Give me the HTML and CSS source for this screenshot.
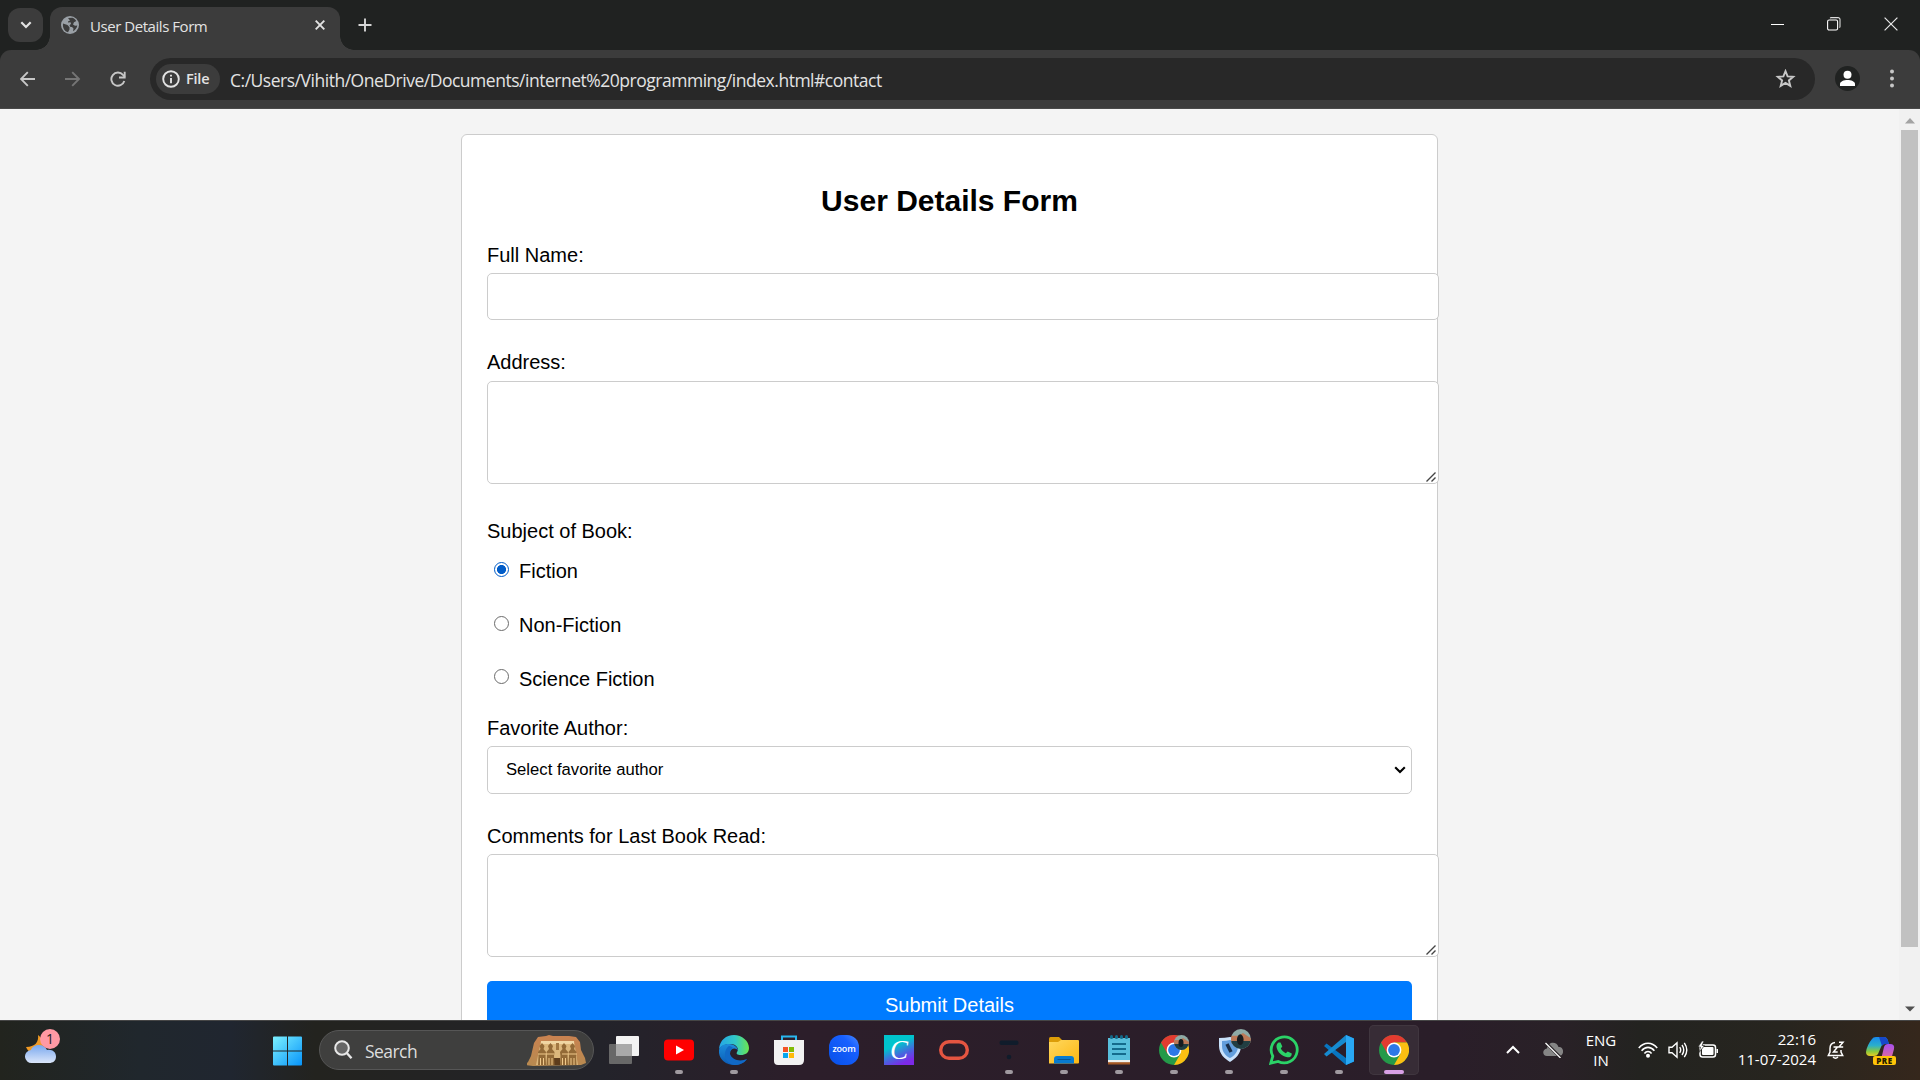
FILE: index.html
```html
<!DOCTYPE html>
<html lang="en">
<head>
<meta charset="utf-8">
<title>User Details Form</title>
<link rel="stylesheet" href="styles.css">
</head>
<body>
<header class="tabstrip">
  <button class="tab-search"><svg width="12" height="8" viewBox="0 0 12 8"><path d="M1.3 1.3 6 6l4.700-4.700" fill="none" stroke="#e3e3e3" stroke-width="2.200"/></svg></button>
  <div class="tab">
    <svg class="globe" width="18" height="18" viewBox="0 0 18 18"><circle cx="9" cy="9" r="9" fill="#9aa0a6"/><path d="M2 7.500 6.500 9l2 2.200v2.300l-1.500 2.800C3.500 15.500 1.500 12 2 7.500ZM7 2l4.500-.3c1.500.5 3 1.800 3.800 3.300l-2.300 1.200-1 2.300 2 1.300 2.300-.2c-.3 2.300-2 4.600-4.300 5.600l.5-2.600-1.500-1.600H9.500l-1-1.500 1.500-1.800-.5-1.500-2.500.3V5.500L9 4.500Z" fill="#3c3c3c"/></svg>
    <span class="tab-title">User Details Form</span>
    <svg class="tab-close" width="10" height="10" viewBox="0 0 10 10"><path d="m.7.7 8.600 8.600m0-8.600L.7 9.300" stroke="#e3e3e3" stroke-width="1.900"/></svg>
  </div>
  <svg class="new-tab" width="14" height="14" viewBox="0 0 14 14"><path d="M7 .5v13M.5 7h13" stroke="#d6d6d6" stroke-width="1.900"/></svg>
  <div class="window-buttons">
    <svg class="minimize" width="14" height="14" viewBox="0 0 14 14"><path d="M0 7.500h13" stroke="#fff"/></svg>
    <svg width="14" height="14" viewBox="0 0 14 14"><rect x=".6" y="3" width="10" height="10" rx="1.500" fill="none" stroke="#fff" stroke-width="1.100"/><path d="M3.200 1.200c.2-.5.500-.6 1-.6H11a2 2 0 0 1 2 2v6.800c0 .6-.2.9-.7 1.100" fill="none" stroke="#ddd" stroke-width="1.100"/></svg>
    <svg width="14" height="14" viewBox="0 0 14 14"><path d="m.6.600 12.800 12.800m0-12.800L.6 13.400" stroke="#e8e8e8" stroke-width="1.200"/></svg>
  </div>
</header>
<div class="toolbar-back">
<nav class="toolbar">
  <svg class="nav-icon" width="16" height="16" viewBox="0 0 16 16"><path d="M15 8H1M7.800 1.200 1 8l6.800 6.800" fill="none" stroke="#c7c7c7" stroke-width="1.900"/></svg>
  <svg class="nav-icon" width="16" height="16" viewBox="0 0 16 16"><path d="M0 8h14M7.200 1.200 14 8l-6.800 6.800" fill="none" stroke="#757575" stroke-width="1.900"/></svg>
  <svg class="nav-icon" width="16" height="16" viewBox="0 0 16 16"><path d="M14.300 10a6.600 6.600 0 1 1-1.300-6.100l1.800 2" fill="none" stroke="#c7c7c7" stroke-width="1.900"/><path d="M14.700 .8v5.700H9" fill="none" stroke="#c7c7c7" stroke-width="1.900"/></svg>
  <div class="omnibox">
    <span class="chip"><svg width="18" height="18" viewBox="0 0 18 18"><circle cx="9" cy="9" r="7.800" fill="none" stroke="#e3e3e3" stroke-width="1.900"/><path d="M9 8v5.200M9 4.700v1.900" stroke="#e3e3e3" stroke-width="1.900"/></svg><span class="chip-text">File</span></span>
    <span class="url">C:/Users/Vihith/OneDrive/Documents/internet%20programming/index.html#contact</span>
    <svg class="star" width="21" height="20" viewBox="0 0 21 20"><path d="m10.500 2.200 2.100 5.200 5.600.4-4.300 3.600 1.400 5.500-4.800-3-4.800 3 1.400-5.500-4.300-3.600 5.600-.4Z" fill="none" stroke="#c7c7c7" stroke-width="1.900"/></svg>
  </div>
  <svg class="profile" width="25" height="25" viewBox="0 0 25 25"><circle cx="12.500" cy="12.500" r="12.500" fill="#202221"/><circle cx="12.500" cy="8.800" r="4" fill="#fff"/><path d="M5 20v-2c0-2.500 4-4 7.500-4s7.500 1.500 7.500 4v2Z" fill="#fff"/></svg>
  <svg class="menu" width="4" height="19" viewBox="0 0 4 19"><g fill="#c7c7c7"><circle cx="2" cy="2.500" r="2"/><circle cx="2" cy="9.500" r="2"/><circle cx="2" cy="16.500" r="2"/></g></svg>
</nav>
</div>
<main class="viewport">
  <div class="page">
    <form class="card">
      <h2 class="title">User Details Form</h2>
      <div class="field"><label for="name">Full Name:</label><input class="box" id="name" type="text"></div>
      <div class="field field-address"><label for="address">Address:</label><div class="area"><textarea class="box" id="address"></textarea><svg class="grip" width="10" height="10" viewBox="0 0 10 10"><path d="M.5 9.500 9.500.5M5.500 9.500l4-4" stroke="#444" stroke-width="1.400"/></svg></div></div>
      <div class="subject">
        <p class="legend">Subject of Book:</p>
        <label class="option"><input type="radio" name="subject" checked>Fiction</label>
        <label class="option"><input type="radio" name="subject">Non-Fiction</label>
        <label class="option"><input type="radio" name="subject">Science Fiction</label>
      </div>
      <div class="field field-author"><label>Favorite Author:</label><div class="select" role="combobox"><span>Select favorite author</span><svg width="12" height="8" viewBox="0 0 12 8"><path d="m1.200 1.200 4.800 4.800 4.800-4.800" fill="none" stroke="#000" stroke-width="2.100"/></svg></div></div>
      <div class="field"><label for="comments">Comments for Last Book Read:</label><div class="area"><textarea class="box" id="comments"></textarea><svg class="grip" width="10" height="10" viewBox="0 0 10 10"><path d="M.5 9.500 9.500.5M5.500 9.500l4-4" stroke="#444" stroke-width="1.400"/></svg></div></div>
      <button class="submit" type="button">Submit Details</button>
    </form>
  </div>
  <div class="scrollbar">
    <svg width="10" height="6" viewBox="0 0 10 6"><path d="M0 5.500 5 0l5 5.500Z" fill="#a3a3a3"/></svg>
    <div class="thumb"></div>
    <svg class="down" width="10" height="6" viewBox="0 0 10 6"><path d="M0 .5 5 5.500l5-5Z" fill="#505050"/></svg>
  </div>
</main>
<footer class="taskbar">
  <div class="weather">
    <svg width="36" height="40" viewBox="0 0 36 40"><defs><linearGradient id="cloud" x2="0" y2="1"><stop stop-color="#79a8ee"/><stop offset="1" stop-color="#dbe6fa"/></linearGradient></defs><path d="M13 7c1 7-3 12-12 12 2 5 7 8 13 5 5-3 6-12-1-17Z" fill="#f09a24"/><path d="M7 35a6.500 6.500 0 0 1-1-13c2-6 13-7 16 0 5-1 9 2 9 6.500S28 35 24 35Z" fill="url(#cloud)"/></svg>
    <span class="count">1</span>
  </div>
  <div class="apps">
    <svg class="start" width="30" height="30" viewBox="0 0 30 30"><defs><linearGradient id="win" x2="1" y2="1"><stop stop-color="#7cf1ff"/><stop offset="1" stop-color="#0794fa"/></linearGradient></defs><path d="M0 1.500Q0 .5 1 .5h13v14H0ZM15 .5h13q1 0 1 1v13H15ZM0 15.500h14v14H1q-1 0-1-1ZM15 15.500h14v13q0 1-1 1H15Z" fill="url(#win)"/></svg>
    <div class="search">
      <svg width="19" height="20" viewBox="0 0 19 20"><circle cx="8" cy="8" r="6.800" fill="#666" stroke="#e8e8e8" stroke-width="2"/><path d="m12.800 13 4.700 5.200" stroke="#e8e8e8" stroke-width="2.400"/></svg>
      <span>Search</span>
      <svg class="temple" width="60" height="32" viewBox="0 0 60 32"><defs><linearGradient id="rock" x2="0" y2="1"><stop stop-color="#c98250"/><stop offset="1" stop-color="#b88a50"/></linearGradient></defs><path d="M1 28 4 22 7 9l4-6 8-1 3-1 4 1 16 0 7 1 4 5 1 8 4 8 1 5-5 2-48 1-8-1Z" fill="url(#rock)"/><path d="M14 7h33l4 24H9Z" fill="#dcb77c"/><path d="M14 7h33v3H14Z" fill="#f0d6a3"/><path d="M27 24h6v7h-6Z" fill="#5d3c1c"/><path d="M29 9h3v7h-3Z" fill="#a27842"/><g fill="#936a37"><path id="king" d="m15 9 2.500 3-1 3 2.500 3-.5 4 .5 9h-8l.5-9-.5-4 2.500-3-1-3Z"/><use href="#king" x="8.500"/><use href="#king" x="22"/><use href="#king" x="30.500"/></g><path d="M13.500 24v7m3-7v7m5.500-7v7m3-7v7m10.500-7v7m3-7v7m5.500-7v7m3-7v7M11 20h16m8 0h15" stroke="#f0c98b" stroke-width="1"/></svg>
    </div>
    <div class="app"><svg width="30" height="30" viewBox="0 0 30 30"><rect x="7" y="1" width="23" height="20" rx="1" fill="#f3f3f3"/><rect y="9" width="23" height="20" rx="1" fill="#686868"/><path d="M7 9h16v12H7Z" fill="#a9a9a9"/></svg></div>
    <div class="app running"><svg width="30" height="30" viewBox="0 0 30 30"><rect y="4.500" width="30" height="21" rx="4" fill="#f00"/><path d="m12 10.500 8 4.500-8 4.500Z" fill="#fff"/></svg></div>
    <div class="app running"><svg width="30" height="30" viewBox="0 0 30 30"><defs><linearGradient id="edge1"><stop stop-color="#24a5e8"/><stop offset=".55" stop-color="#32c8c7"/><stop offset="1" stop-color="#6be74e"/></linearGradient><linearGradient id="edge2" x2="0" y2="1"><stop stop-color="#1c8ddc"/><stop offset="1" stop-color="#0b5bb5"/></linearGradient></defs><path d="M0 14C1 5 7 0 15 0s15 6 15 13c0 5-4 7-8 7-4 0-5-1-4-3 3-3-1-8-6-8C6 9 2 11 0 14Z" fill="url(#edge1)"/><path d="M0 15c1-5 6-6 10-6 6 0 9 4 9 7-2-4-8-3-8 3 0 6 6 9 11 8 2 0 4-1 6-3-3 4-7 6-13 6C6 30-1 23 0 15Z" fill="url(#edge2)"/><path d="M10 11c-6 4-6 17 5 19 5 0 10-2 13-6-7 3-15 1-17-5-.5-3 .5-5 3-6-1-1-2-2-4-2Z" fill="#1169c6"/></svg></div>
    <div class="app"><svg width="30" height="30" viewBox="0 0 30 30"><path d="M8 7V1.500h14V7" fill="none" stroke="#29b7ef" stroke-width="2"/><path d="M0 5h30v20q0 5-5 5H4q-4 0-4-4Z" fill="#f2f2f2"/><path d="M9 12h5v5H9Z" fill="#f35325"/><path d="M15 12h5v5h-5Z" fill="#81bc06"/><path d="M9 18h5v5H9Z" fill="#05a6f0"/><path d="M15 18h5v5h-5Z" fill="#ffba08"/></svg></div>
    <div class="app"><span class="zoom-app">zoom</span></div>
    <div class="app"><span class="canva-app">C</span></div>
    <div class="app"><svg width="30" height="30" viewBox="0 0 30 30"><rect x="1.700" y="6.700" width="26.600" height="16.600" rx="8.300" fill="none" stroke="#e55541" stroke-width="3.400"/></svg></div>
    <div class="app running"><svg width="30" height="30" viewBox="0 0 30 30"><rect x="5.500" y="5.500" width="19" height="4.500" rx="2" fill="#101c2b"/><circle cx="15" cy="22" r="2.300" fill="#101c2b"/></svg></div>
    <div class="app running"><svg width="30" height="30" viewBox="0 0 30 30"><defs><linearGradient id="folder" x2="1" y2="1"><stop stop-color="#ffd85e"/><stop offset="1" stop-color="#fcb713"/></linearGradient></defs><path d="M0 3.500Q0 2 1.500 2H10l3 3v5H0Z" fill="#dc9d08"/><path d="M0 7h9l3-2h17q1 0 1 1v21.500q0 1-1 1H0Z" fill="url(#folder)"/><path d="M5 28.500V24q0-3 3-3h14q3 0 3 3v4.500Z" fill="#087bd0"/><path d="M8.500 24.500h13" stroke="#075696"/></svg></div>
    <div class="app running"><svg width="30" height="30" viewBox="0 0 30 30"><path d="M4 26h22v3.500H4Z" fill="#a45722"/><path d="M4 3h22v24H4Z" fill="#58bfdc"/><path d="M4 25h22v2.200H4Z" fill="#f0f0ed"/><path d="M8 9h14M8 14h14M8 19h14" stroke="#146b8c" stroke-width="1.800"/><g fill="#126b8b"><rect x="6" y="0" width="3" height="4" rx="1.500"/><rect x="11" y="0" width="3" height="4" rx="1.500"/><rect x="16" y="0" width="3" height="4" rx="1.500"/><rect x="21" y="0" width="3" height="4" rx="1.500"/></g></svg></div>
    <div class="app running"><svg width="30" height="30" viewBox="0 0 30 30"><g id="chrome"><circle cx="15" cy="15" r="15" fill="#249a49"/><path d="M2 7.500A15 15 0 0 1 28 7.500H15L8.500 18.700Z" fill="#e23b30"/><path d="M28 7.500A15 15 0 0 1 15 30l6.500-11.200L15 7.500Z" fill="#fbbf12"/><circle cx="15" cy="15" r="7.400" fill="#fff"/><circle cx="15" cy="15" r="5.900" fill="#2c78e7"/></g><g><clipPath id="face"><circle cx="22.500" cy="7.500" r="7.500"/></clipPath><g id="avatar" clip-path="url(#face)"><path d="M15 0h15v15H15Z" fill="#8eaaa6"/><path d="M15 5h6l3-2 6 4v4H15Z" fill="#bd7957"/><path d="M15 9h15v6H15Z" fill="#213e42"/><ellipse cx="22" cy="8" rx="2.500" ry="4" fill="#171c20"/></g></g></svg></div>
    <div class="app running"><svg class="shield" width="36" height="36" viewBox="0 0 36 36"><path d="M4 9q6 0 11-1 5 1 11 1v8c0 8-6 13-11 16C10 30 4 25 4 17Z" fill="#c9e2fb"/><path d="M7 12q4 0 8-1 4 1 8 1v5c0 6-4 10-8 12-4-2-8-6-8-12Z" fill="#629edc"/><path d="m12 15 4 8" stroke="#192d47" stroke-width="3.500"/><g transform="translate(-4 0) scale(1.330)"><use href="#avatar"/></g></svg></div>
    <div class="app running"><svg width="30" height="30" viewBox="0 0 30 30"><path d="m1.800 28.200 2-7.100A13 13 0 1 1 9.200 26.400Z" fill="none" stroke="#2bd267" stroke-width="2.800"/><path d="M9.500 7.500h2l1.800 4.100-1.500 2c1.200 2.200 2.800 3.700 5 4.700l1.900-1.900 4.100 2c.1 3-2.300 4.300-4.400 3.900C13 21.400 8.500 17.500 7.500 12c-.2-2 .8-3.800 2-4.500Z" fill="#2bd267"/></svg></div>
    <div class="app running"><svg width="30" height="30" viewBox="0 0 30 30"><path d="m22 0 8 3.500v23L22 30 0 11l2.500-2.500L22 23Z" fill="#0875bf"/><path d="M22 7 2.500 21.500 0 19 22 0Z" fill="#168bd0"/><path d="M22 0 30 3.500v23L22 30Z" fill="#29a8f4"/></svg></div>
    <div class="app running active"><svg width="30" height="30" viewBox="0 0 30 30"><use href="#chrome"/></svg></div>
  </div>
  <div class="tray">
    <svg class="chevron" width="14" height="9" viewBox="0 0 14 9"><path d="m1 8 6-6 6 6" fill="none" stroke="#fff" stroke-width="2"/></svg>
    <svg class="cloud" width="20" height="16" viewBox="0 0 20 16"><path d="M4 14C-1 14-1 7 4 6.500 5-1 14-1 15.500 5 21 4 22 14 16 14Z" fill="#858585"/><path d="m3 1 15 15" stroke="#2a2427" stroke-width="3"/><path d="m2.500 1 15 15" stroke="#fff" stroke-width="1.200"/></svg>
    <div class="language"><span>ENG</span><span>IN</span></div>
    <div class="status">
      <svg width="20" height="16" viewBox="0 0 20 16"><g fill="none" stroke="#fff" stroke-width="1.600"><path d="M.8 6C6-.4 14-.4 19.200 6"/><path d="M3.600 8.700c3.700-4.400 9.100-4.400 12.800 0"/><path d="M6.400 11.400c2-2.500 5.200-2.500 7.200 0"/></g><circle cx="10" cy="13.700" r="2" fill="#fff"/></svg>
      <svg width="20" height="18" viewBox="0 0 20 18"><g fill="none" stroke="#fff" stroke-width="1.400"><path d="M1 6.300h3l5-4.500v14.400l-5-4.500H1Z"/><path d="M11.700 6.200q2 2.800 0 5.600M14 4q3.500 5 0 10M16.300 1.800q5 7.200 0 14.400"/></g></svg>
      <svg width="20" height="18" viewBox="0 0 20 18"><rect x="2" y="4" width="15.500" height="12" rx="2.500" fill="none" stroke="#fff" stroke-width="1.500"/><rect x="4" y="6" width="11.500" height="8" rx="1" fill="#fff"/><path d="M18.500 8h1.500v4h-1.500Z" fill="#fff"/><path d="M4 0 0 6h2.500L1 11.500 6.500 4.500H4L6 0Z" fill="#fff" stroke="#272622" stroke-width=".7"/></svg>
    </div>
    <div class="clock"><span>22:16</span><span>11-07-2024</span></div>
    <svg class="bell" width="18" height="19" viewBox="0 0 18 19"><path d="M8 1.600C4.500 2 3 4.500 3 7.500V11l-1.700 3.500h14.400L14 11V9M6 16q2.500 2.500 5 0" fill="none" stroke="#fff" stroke-width="1.500"/><path d="M6.500 6h4l-4 5h4.200M12 1.200h4L12 6h4.200" fill="none" stroke="#fff" stroke-width="1.500"/></svg>
    <div class="copilot">
      <svg width="30" height="28" viewBox="0 0 30 28"><defs><linearGradient id="cop1" x2="0" y2="1"><stop stop-color="#1789ee"/><stop offset=".45" stop-color="#2bafca"/><stop offset=".75" stop-color="#87c83f"/><stop offset="1" stop-color="#e8cb22"/></linearGradient><linearGradient id="cop2" x2="0" y2="1"><stop stop-color="#a64fef"/><stop offset="1" stop-color="#f7777b"/></linearGradient></defs><path d="M6 2q1-2 4-2h8q3 0 4 4l1 3h-4q-3 0-4 3l-3 7q-1 2-4 2H4q-4 0-4-4Q1 8 6 2Z" fill="url(#cop1)"/><path d="M13 0h5q3 0 4 4l1 3h-4q-2 0-3 2Z" fill="#1748c9"/><path d="M18 10q1-3 4-3h2q5 0 4 5l-3 11q-1 4-4 4h-7Z" fill="url(#cop2)"/></svg>
      <span class="pre">PRE</span>
    </div>
  </div>
</footer>
</body>
</html>
```
FILE: styles.css
```css
* { box-sizing: border-box; }
html, body { margin: 0; height: 100%; overflow: hidden; }
body { display: flex; flex-direction: column; width: 1920px; height: 1080px; font-family: "Open Sans", "Noto Sans", sans-serif; background: #f4f4f4; }
svg { display: block; flex: none; }
button { border: 0; padding: 0; font: inherit; }

/* Browser frame */
.tabstrip { display: flex; align-items: flex-start; height: 50px; flex: none; padding-left: 8px; background: #202221; }
.tab-search { width: 35px; height: 34px; margin: 8px 7px 0 0; border-radius: 12px; background: #3c3c3c; display: flex; align-items: center; justify-content: center; }
.tab { position: relative; display: flex; align-items: center; width: 290px; height: 43px; margin-top: 7px; padding: 0 15px 8px 11px; border-radius: 12px 12px 0 0; background: #3c3c3c; }
.tab::before, .tab::after { content: ""; position: absolute; bottom: 0; width: 14px; height: 14px; }
.tab::before { left: -14px; background: radial-gradient(circle at 0 0, transparent 13.500px, #3c3c3c 14px); }
.tab::after { right: -14px; background: radial-gradient(circle at 100% 0, transparent 13.500px, #3c3c3c 14px); }
.tab-title { flex: 1; margin-left: 11px; padding-top: 2px; font-size: 15px; line-height: 20px; letter-spacing: -.450px; color: #e3e3e3; white-space: nowrap; }
.new-tab { margin: 18px 0 0 18px; }
.window-buttons { display: flex; gap: 43px; margin: 17px 22px 0 auto; }
.minimize { margin-right: -1px; }
.toolbar-back { flex: none; height: 59px; background: #202221; }
.toolbar { display: flex; align-items: center; height: 59px; padding: 0 26px 1px 20px; border-radius: 11px 11px 0 0; border-bottom: 1px solid #494949; background: #3c3c3c; }
.nav-icon { margin-right: 29px; }
.omnibox { display: flex; align-items: center; width: 1665px; height: 42px; padding: 0 19px 0 6px; margin: 0 20px 0 -5px; border-radius: 21px; background: #282828; }
.chip { display: flex; align-items: center; gap: 6px; width: 64px; height: 30px; padding-left: 6px; border-radius: 15px; background: #3c3c3c; }
.chip-text { font-size: 14.500px; line-height: 20px; font-weight: 600; color: #e3e3e3; letter-spacing: -.200px; }
.url { flex: 1; margin-left: 10px; padding-top: 2px; font-size: 17.500px; line-height: 24px; letter-spacing: -.480px; color: #e3e3e3; white-space: nowrap; }
.menu { margin-left: auto; }

/* Document */
.viewport { display: flex; flex: none; height: 911px; overflow: hidden; background: #f4f4f4; }
.page { width: 1899px; padding: 25px 0 0 461px; overflow: hidden; font-family: "Liberation Sans", Arial, sans-serif; font-size: 20px; line-height: 24px; color: #000; }
.card { width: 977px; height: 950px; padding: 48px 25px 0; border: 1px solid #ccc; border-radius: 6px; background: #fff; }
.title { margin: 0 0 24px; font-size: 30px; line-height: 36px; text-align: center; }
.field { display: flex; flex-direction: column; gap: 6px; margin-bottom: 30px; }
.field-address { margin-bottom: 35px; }
.box { display: block; width: 952px; height: 47px; padding: 12px; border: 1px solid #ccc; border-radius: 5px; background: #fff; resize: none; outline: 0; }
.area { position: relative; width: 952px; }
.area .box { height: 103px; }
.field-address label { height: 25px; }
.grip { position: absolute; right: 3px; bottom: 2px; }
.subject { display: flex; flex-direction: column; margin-bottom: 25px; }
.legend { margin: 0 0 16px; }
.option { display: flex; align-items: flex-start; height: 24px; padding-left: 7px; }
.option + .option { margin-top: 30px; }
.option input { appearance: none; width: 15px; height: 15px; margin: 3px 10px 0 0; border: 1px solid #6b6b6b; border-radius: 50%; background: #fff; }
.option:last-child input { margin-top: 2px; }
.option input:checked { border-color: #005cc8; background: radial-gradient(circle, #005cc8 4.200px, #fff 4.900px); }
.select { display: flex; align-items: center; justify-content: space-between; width: 925px; height: 48px; padding: 0 5px 0 18px; border: 1px solid #ccc; border-radius: 5px; background: #fff; font-size: 16.667px; }
.select span { padding-bottom: 1px; }
.submit { display: block; width: 925px; height: 50px; margin-top: -6px; padding-bottom: 2px; border-radius: 5px; background: #007bff; color: #fff; font-size: 20px; line-height: 24px; }
.scrollbar { display: flex; flex-direction: column; align-items: center; width: 21px; padding: 9px 0 8px; background: #f1f1f1; }
.thumb { width: 17px; height: 817px; margin-top: 6px; background: #c1c1c1; }
.down { margin-top: auto; }

/* Taskbar */
.taskbar { display: flex; flex: none; height: 60px; padding: 0 24px 0 25px; border-top: 1px solid #464646; color: #fff; background: linear-gradient(90deg, #22241e 0, #20272d 140px, #202630 230px, #23231f 315px, #23232a 600px, #2c1e2a 800px, #2a1e29 1450px, #292127 1560px, #232320 1640px, #27251f 1780px, #35271c 1920px); }
.weather { position: relative; width: 36px; height: 40px; margin-top: 7px; }
.count { position: absolute; left: 15px; top: 1px; width: 20px; height: 20px; border-radius: 50%; background: #ff99a4; color: #222; font-size: 14px; line-height: 20px; text-align: center; }
.apps { display: flex; align-items: flex-start; margin-left: 212px; }
.start { margin: 15px 16px 0 0; }
.search { display: flex; align-items: center; width: 275px; height: 40px; margin: 9px 15px 0 0; padding: 0 6px 0 14px; border: 1px solid #565656; border-radius: 20px; background: #3f3f3e; }
.search span { margin-left: 12px; padding-top: 2px; font-size: 17.500px; line-height: 24px; letter-spacing: -.550px; color: #ddd; }
.temple { margin-left: auto; }
.app { position: relative; display: flex; justify-content: center; width: 50px; height: 50px; margin: 4px 5px 0 0; padding-top: 10px; border-radius: 5px; }
.search + .app { margin-left: -10px; }
.running::after { content: ""; position: absolute; bottom: 1px; width: 8px; height: 4px; border-radius: 2px; background: #a09aa0; }
.active { background: #372c36; box-shadow: inset 0 0 0 1px #40363f; }
.active::after { width: 20px; background: #d9a0e6; }
.zoom-app { width: 30px; height: 30px; border-radius: 12px; background: linear-gradient(45deg, #0750e8, #1760ff 70%, #4b8cff); font-size: 9px; line-height: 28px; font-weight: 600; text-align: center; letter-spacing: -.200px; }
.canva-app { width: 30px; height: 30px; background: linear-gradient(155deg, #00c4cc 35%, #4f5ce0 65%, #7d2ae8 85%); font: italic 27px/30px "Liberation Serif", serif; text-align: center; }
.shield { margin: -6px -8px 0 0; }
.tray { display: flex; align-items: flex-start; margin-left: auto; font-size: 15px; line-height: 20px; }
.chevron { margin: 24px 23px 0 0; }
.cloud { margin: 21px 21px 0 0; }
.language { display: flex; flex-direction: column; width: 34px; margin: 9px 20px 0 0; text-align: center; }
.status { display: flex; align-items: center; gap: 10px; height: 20px; margin-top: 19px; }
.clock { display: flex; flex-direction: column; width: 98px; margin: 8px 11px 0 0; text-align: right; white-space: nowrap; }
.bell { margin: 20px 21px 0 0; }
.copilot { position: relative; width: 30px; margin-top: 16px; }
.pre { position: absolute; left: 7px; top: 19px; width: 23px; height: 9px; border-radius: 2px; background: #ffc408; color: #241b00; font-size: 8px; line-height: 9px; font-weight: 800; text-align: center; letter-spacing: .600px; }
```
